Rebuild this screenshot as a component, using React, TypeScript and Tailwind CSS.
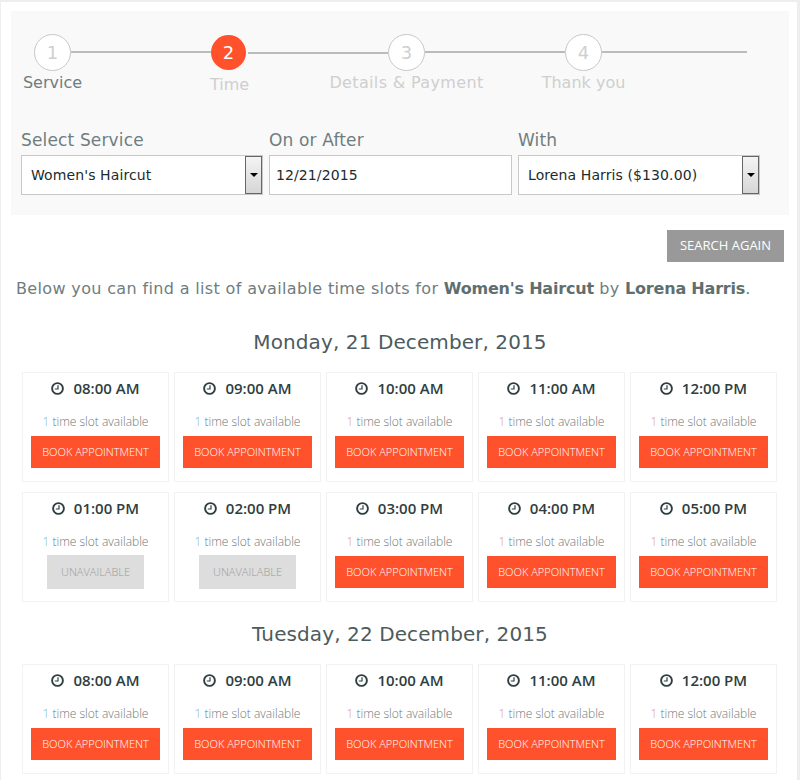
const sans = "font-['DejaVu_Sans',sans-serif]";

const steps = [
  { num: 1, label: 'Service', width: 'w-[177px]', labelClass: 'mt-[2px] text-[#6f7d80]', lineClass: 'mt-[17px]' },
  { num: 2, label: 'Time', width: 'w-[177px]', labelClass: 'mt-[5px] text-[#cfcfcf]', lineClass: 'mt-[18px]' },
  { num: 3, label: 'Details & Payment', width: 'w-[177px]', labelClass: 'mt-[2px] tracking-[0.35px] text-[#cfcfcf]', lineClass: 'mt-[17px]' },
  { num: 4, label: 'Thank you', width: 'w-[182px]', labelClass: 'mt-[2px] text-[#cfcfcf]', lineClass: 'mt-[17px]' },
];

const ClockIcon = () => (
  <svg width="13" height="13" viewBox="0 0 13 13" fill="none" stroke="#2f3e40" className="shrink-0">
    <circle cx="6.5" cy="6.5" r="5.4" strokeWidth="1.9" />
    <path d="M7 3.2V7H3.8" strokeWidth="1.2" />
  </svg>
);

const SelectBox = ({ value }: { value: string }) => (
  <div className="flex h-10 w-[242px] items-center justify-between border border-[#c8c8c8] bg-white pl-[9px] text-sm tracking-[0.1px] text-[#1c2b2d]">
    <span>{value}</span>
    <div className="flex h-[38px] w-[17px] items-center justify-center border border-[#666] bg-gradient-to-b from-[#f4f4f4] to-[#d6d6d6]">
      <div className="h-0 w-0 border-x-[4px] border-t-[4px] border-x-transparent border-t-black" />
    </div>
  </div>
);

const SlotCard = ({ time, column, unavailable }: { time: string; column: number; unavailable?: boolean }) => (
  <div className="flex h-[110px] flex-col items-center border border-[#f2f2f2] font-['Open_Sans',sans-serif]">
    <div className="mt-[3px] flex h-[24px] items-center gap-[9px] text-[15px] font-semibold text-[#2f3e40]">
      <ClockIcon />
      <span>{time}</span>
    </div>
    <div className="mt-[13px] h-[17px] text-xs font-light leading-[17px] text-[#6d7a7c]">
      <span className={column < 2 ? 'text-[#7cc0c8]' : 'text-[#d49f92]'}>1</span> time slot available
    </div>
    {unavailable ? (
      <button className="mt-[5px] h-[34px] w-[97px] bg-[#dddddd] text-[11px] font-light text-[#9a9a9a]">
        UNAVAILABLE
      </button>
    ) : (
      <button className="mt-[6px] h-8 w-[129px] bg-[#ff512b] text-[11px] font-light text-white">
        BOOK APPOINTMENT
      </button>
    )}
  </div>
);

const monday = ['08:00 AM', '09:00 AM', '10:00 AM', '11:00 AM', '12:00 PM', '01:00 PM', '02:00 PM', '03:00 PM', '04:00 PM', '05:00 PM'];
const tuesday = monday.slice(0, 5);

const SlotGrid = ({ times, closed = [] }: { times: string[]; closed?: string[] }) => (
  <div className="mx-[11px] grid grid-cols-[repeat(5,147px)] gap-x-[5px] gap-y-[10px]">
    {times.map((time, i) => (
      <SlotCard key={time} time={time} column={i % 5} unavailable={closed.includes(time)} />
    ))}
  </div>
);

export default function App() {
  return (
    <div className={`h-[780px] w-[800px] overflow-hidden bg-white ${sans}`}>
      <div className="h-full w-full border-l border-r-[3px] border-t-2 border-[#eeeeee] px-[10px] pt-[9px]">
        <div className="h-[204px] w-[778px] bg-[#f9f9f9] pl-[10px] pt-[23px]">
          <div className="ml-[13px] flex">
            {steps.map((step) => (
              <div key={step.num} className={`flex ${step.width}`}>
                <div className="flex w-[37px] flex-col items-center">
                  {step.num === 2 ? (
                    <div className="mr-[2px] mt-[1px] flex h-[35px] w-[35px] shrink-0 items-center justify-center rounded-full bg-[#ff512b] text-lg text-white">
                      2
                    </div>
                  ) : (
                    <div className="flex h-[37px] w-[37px] shrink-0 items-center justify-center rounded-full border border-[#c8c8c8] bg-white text-lg text-[#cfcfcf]">
                      {step.num}
                    </div>
                  )}
                  <span className={`whitespace-nowrap text-base leading-[20px] ${step.labelClass}`}>
                    {step.label}
                  </span>
                </div>
                <div className={`h-[2px] flex-1 bg-[#bbbbbb] ${step.lineClass}`} />
              </div>
            ))}
          </div>
          <div className="mt-[35px] flex gap-[7px] text-[17px] tracking-[0.15px] text-[#6f7d80]">
            <div className="w-[241px]">
              <div className="mb-[5px] leading-[20px]">Select Service</div>
              <SelectBox value="Women's Haircut" />
            </div>
            <div className="w-[243px]">
              <div className="mb-[5px] leading-[20px]">On or After</div>
              <div className="flex h-10 items-center border border-[#c8c8c8] bg-white pl-[6px] text-sm tracking-[0.1px] text-[#1c2b2d]">
                12/21/2015
              </div>
            </div>
            <div className="ml-[-1px] w-[242px]">
              <div className="mb-[5px] leading-[20px]">With</div>
              <SelectBox value="Lorena Harris ($130.00)" />
            </div>
          </div>
        </div>
        <div className="mt-[15px] flex justify-end pr-[3px]">
          <button className="h-8 w-[117px] bg-[#999999] font-['Open_Sans',sans-serif] text-[13px] text-white">
            SEARCH AGAIN
          </button>
        </div>
        <p className="ml-[5px] mt-[17px] whitespace-nowrap text-base leading-[20px] tracking-[0.35px] text-[#6f7d80]">
          Below you can find a list of available time slots for <b className="tracking-[-0.2px] text-[#5f6f70]">Women's Haircut</b> by <b className="tracking-[-0.2px] text-[#5f6f70]">Lorena Harris</b>.
        </p>
        <h2 className="mb-[16px] ml-[2px] mt-[29px] text-center text-xl leading-[28px] tracking-[0.1px] text-[#4d5b5d]">Monday, 21 December, 2015</h2>
        <SlotGrid times={monday} closed={['01:00 PM', '02:00 PM']} />
        <h2 className="mb-[16px] ml-[2px] mt-[18px] text-center text-xl leading-[28px] tracking-[0.1px] text-[#4d5b5d]">Tuesday, 22 December, 2015</h2>
        <SlotGrid times={tuesday} />
      </div>
    </div>
  );
}
